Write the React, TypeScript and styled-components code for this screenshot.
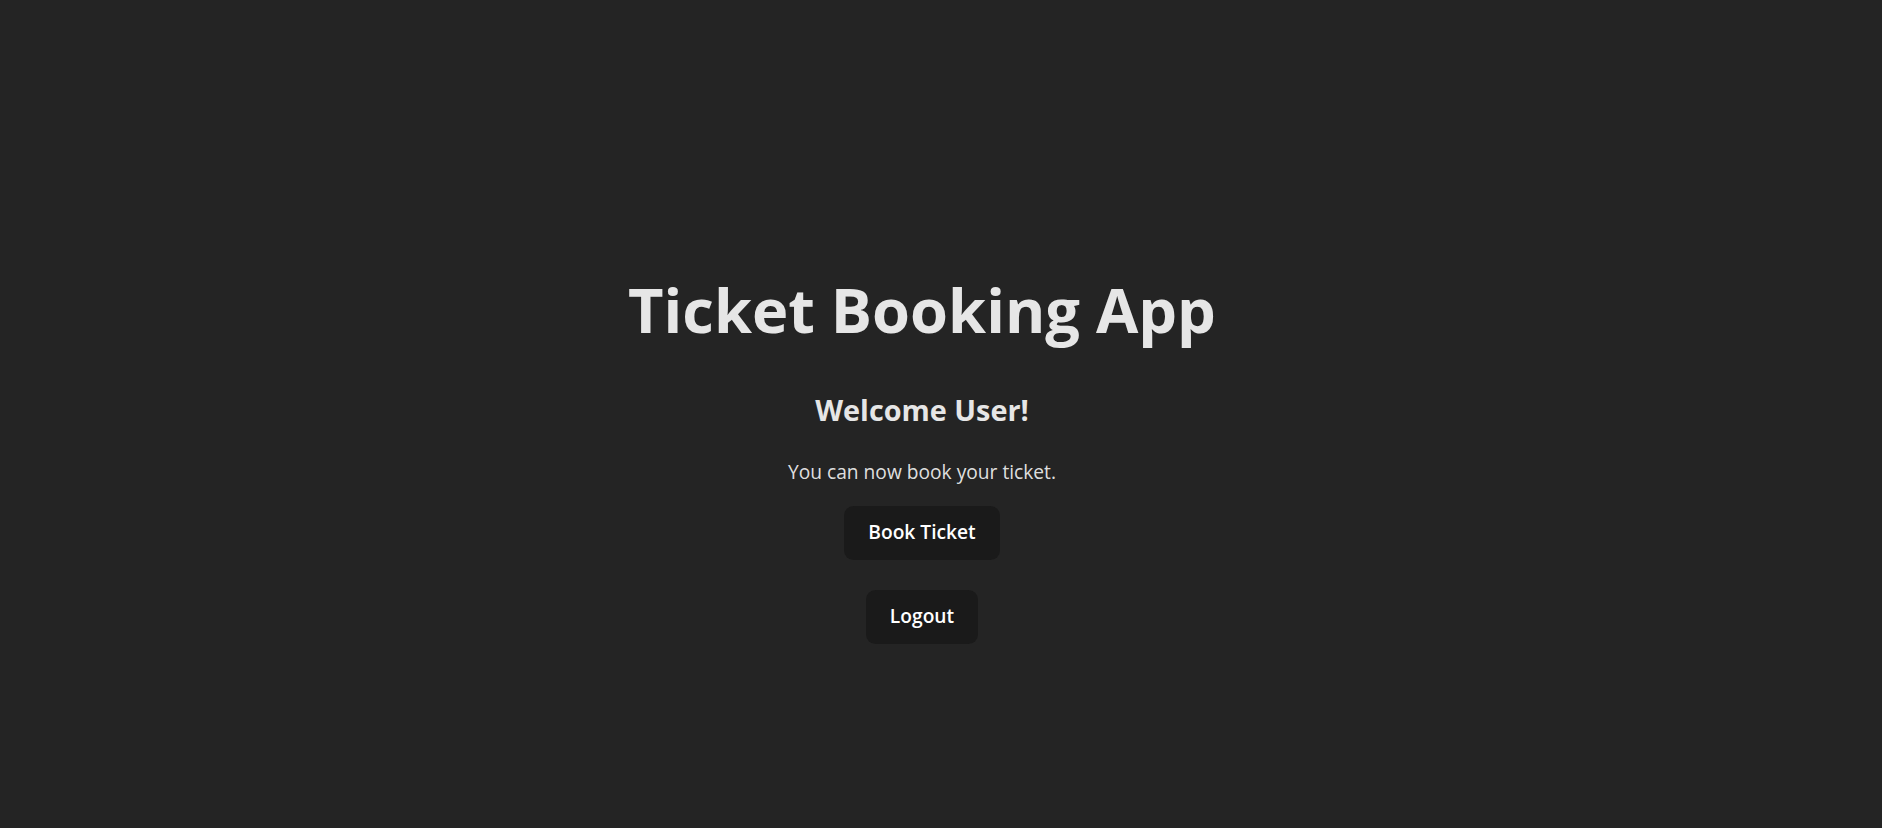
import React from 'react';
import styled, { createGlobalStyle } from 'styled-components';

const GlobalStyle = createGlobalStyle`
  html, body {
    margin: 0;
    padding: 0;
  }

  body {
    background-color: #242424;
    color: rgba(255, 255, 255, 0.87);
    font-family: "Open Sans", "Noto Sans", Arial, sans-serif;
    font-size: 19.2px;
    line-height: 1.5;
    -webkit-font-smoothing: antialiased;
  }
`;

// Full-height page that centers the card both ways
const Page = styled.main`
  display: flex;
  align-items: center;
  justify-content: center;
  min-height: 100vh;
`;

// Column holding the heading, greeting and actions
const Content = styled.section`
  display: flex;
  flex-direction: column;
  align-items: center;
  padding: 130px 76px 38px 38px;
  text-align: center;
`;

const Title = styled.h1`
  margin: 0 0 44px;
  font-size: 61.4px;
  font-weight: 700;
  line-height: 1.1;
  color: #e6e6e6;
`;

const Greeting = styled.h2`
  margin: 0 0 27px;
  font-size: 28.8px;
  font-weight: 700;
  line-height: 1.5;
  color: #e6e6e6;
`;

const Message = styled.p`
  margin: 0 0 19px;
  font-size: 19.2px;
  line-height: 1.5;
`;

// Dark rounded action button
const Button = styled.button<{ $spaced?: boolean }>`
  margin-top: ${(p) => (p.$spaced ? '30px' : '0')};
  padding: 11.5px 23px;
  border: 1px solid transparent;
  border-radius: 9.6px;
  background-color: #1a1a1a;
  color: #ffffff;
  font-family: inherit;
  font-size: 19.2px;
  font-weight: 600;
  line-height: 1.5;
  cursor: pointer;
  transition: border-color 0.25s;

  &:hover {
    border-color: #646cff;
  }
`;

const App = () => {
  return (
    <>
      <GlobalStyle />
      <Page>
        <Content>
          <Title>Ticket Booking App</Title>
          <Greeting>Welcome User!</Greeting>
          <Message>You can now book your ticket.</Message>
          <Button>Book Ticket</Button>
          <Button $spaced>Logout</Button>
        </Content>
      </Page>
    </>
  );
};

export default App;
